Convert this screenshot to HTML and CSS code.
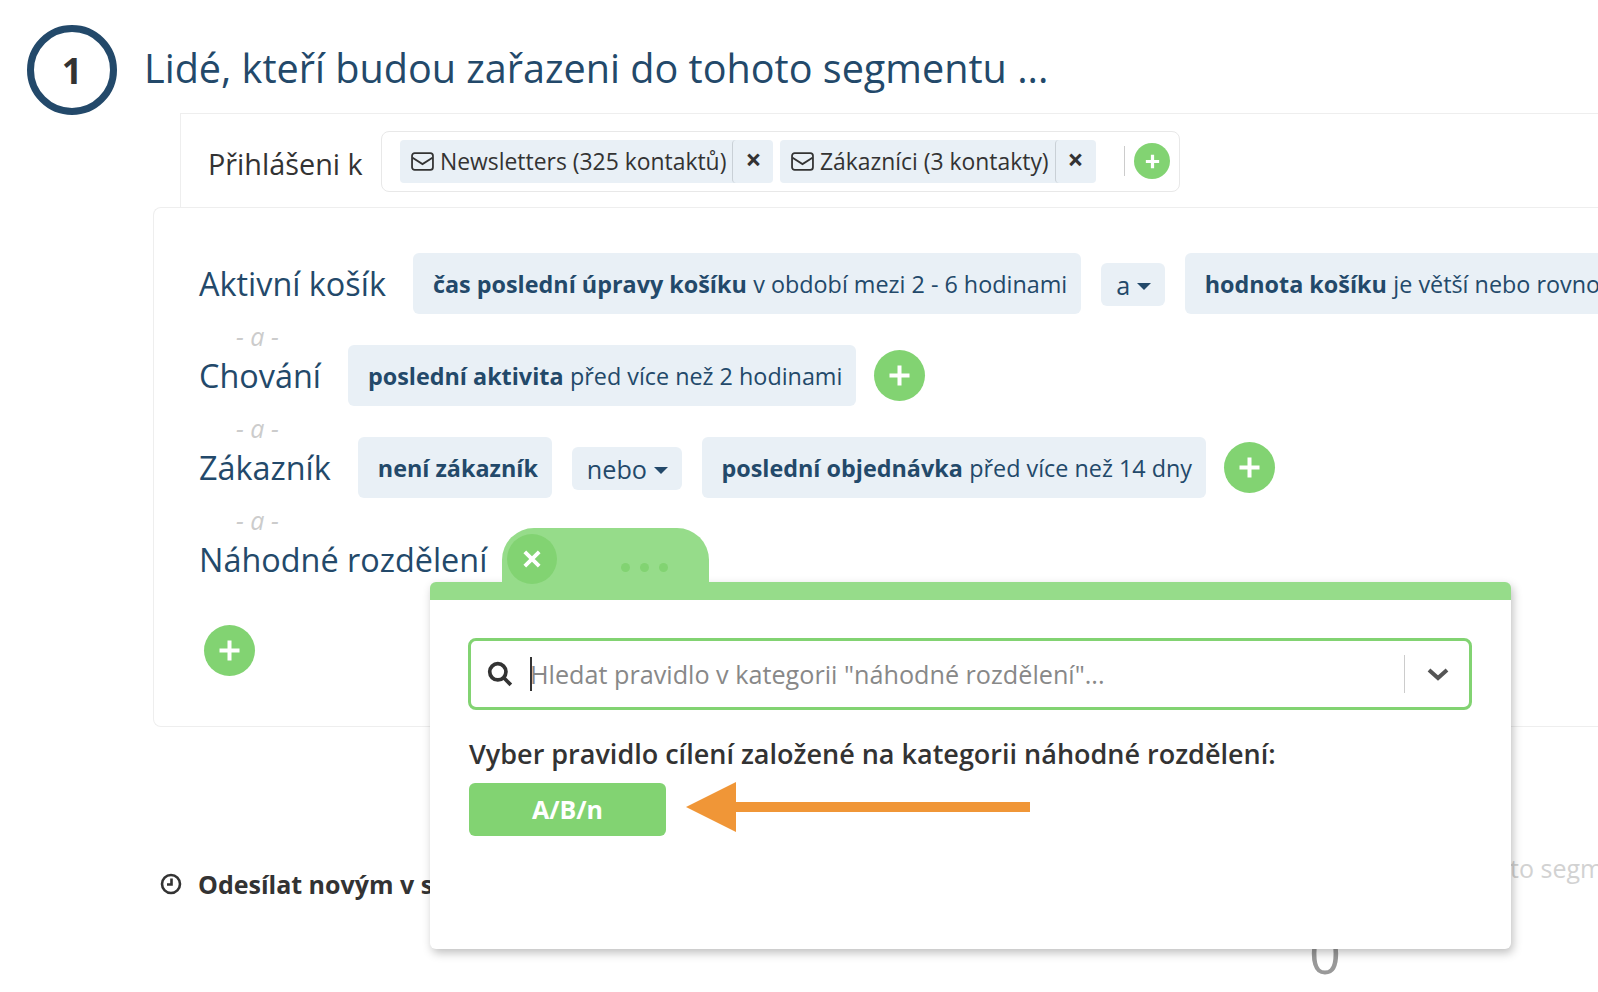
FILE: index.html
```html
<!DOCTYPE html>
<html>
<head>
<meta charset="utf-8">
<link rel="stylesheet" href="styles.css">
</head>
<body>
<div class="page">

    <div class="step-head">
        <div class="step-num">1</div>
        <h1>Lidé, kteří budou zařazeni do tohoto segmentu ...</h1>
    </div>

    <div class="subscribed">
        <div class="subscribed-label">Přihlášeni k</div>
        <div class="tag-box">
            <div class="tag">
                <svg class="mail" viewBox="0 0 22 18"><rect x="1" y="1" width="20" height="16" rx="2.5"/><path d="M1.5 5.5 L11 11.5 L20.5 5.5"/></svg>
                <span class="tag-text">Newsletters (325 kontaktů)</span>
                <span class="tag-x">×</span>
            </div>
            <div class="tag">
                <svg class="mail" viewBox="0 0 22 18"><rect x="1" y="1" width="20" height="16" rx="2.5"/><path d="M1.5 5.5 L11 11.5 L20.5 5.5"/></svg>
                <span class="tag-text">Zákazníci (3 kontakty)</span>
                <span class="tag-x">×</span>
            </div>
            <div class="tag-sep"></div>
            <div class="plus plus-small"><svg viewBox="0 0 20 20"><path d="M10 3V17M3 10H17"/></svg></div>
        </div>
    </div>

    <div class="rules">
        <div class="rule-row">
            <div class="rule-label">Aktivní košík</div>
            <div class="chip"><b>čas poslední úpravy košíku</b> v období mezi 2 - 6 hodinami</div>
            <div class="joiner">a<i class="caret"></i></div>
            <div class="chip chip-wide"><b>hodnota košíku</b> je větší nebo rovno</div>
        </div>
        <div class="and">- a -</div>
        <div class="rule-row">
            <div class="rule-label">Chování</div>
            <div class="chip"><b>poslední aktivita</b> před více než 2 hodinami</div>
            <div class="plus"><svg viewBox="0 0 20 20"><path d="M10 2V18M2 10H18"/></svg></div>
        </div>
        <div class="and">- a -</div>
        <div class="rule-row">
            <div class="rule-label">Zákazník</div>
            <div class="chip"><b>není zákazník</b></div>
            <div class="joiner">nebo<i class="caret"></i></div>
            <div class="chip"><b>poslední objednávka</b> před více než 14 dny</div>
            <div class="plus"><svg viewBox="0 0 20 20"><path d="M10 2V18M2 10H18"/></svg></div>
        </div>
        <div class="and">- a -</div>
        <div class="rule-row rule-row-last">
            <div class="rule-label">Náhodné rozdělení</div>
        </div>
        <div class="plus plus-add"><svg viewBox="0 0 20 20"><path d="M10 2V18M2 10H18"/></svg></div>
    </div>

    <div class="footer-row">
        <div class="send-new">
            <svg class="clock" viewBox="0 0 22 22"><circle cx="11" cy="11" r="9"/><path d="M11.5 5.5V11.5H7"/></svg>
            Odesílat novým v segmentu
        </div>
        <div class="count-note">v tomto segmentu</div>
    </div>
    <div class="count">0</div>

    <!-- rule picker -->
    <div class="picker">
        <div class="picker-tab">
            <div class="picker-close"><svg viewBox="0 0 20 20"><path d="M4 4L16 16M16 4L4 16"/></svg></div>
            <div class="picker-dots"><i></i><i></i><i></i></div>
        </div>
        <div class="picker-body">
            <div class="search">
                <svg class="search-icon" viewBox="0 0 24 24"><circle cx="10" cy="10" r="7.5"/><path d="M15.5 15.5L22 22"/></svg>
                <i class="cursor"></i>
                <span class="search-ph">Hledat pravidlo v kategorii "náhodné rozdělení"...</span>
                <div class="search-sep"></div>
                <svg class="chevron" viewBox="0 0 22 13"><path d="M2 2L11 10L20 2"/></svg>
            </div>
            <div class="picker-title">Vyber pravidlo cílení založené na kategorii náhodné rozdělení:</div>
            <div class="picker-options">
                <div class="btn-green">A/B/n</div>
                <svg class="arrow" viewBox="0 0 344 50"><path d="M0 25L50 0V20H344V30H50V50Z"/></svg>
            </div>
        </div>
    </div>

</div>
</body>
</html>
```

FILE: styles.css
```css
* { box-sizing: border-box; }
html, body { margin: 0; height: 100%; overflow: hidden; background: #fff; }
body { font-family: "Open Sans", sans-serif; color: #333; }
.page { position: relative; width: 1598px; height: 992px; overflow: hidden; }

/* step heading */
.step-head { display: flex; align-items: center; padding: 25px 0 0 27px; height: 115px; }
.step-num {
    width: 90px; height: 90px; flex: none;
    border: 7px solid #23496a; border-radius: 50%;
    display: flex; align-items: center; justify-content: center;
    font-size: 36px; font-weight: 700; color: #333;
}
h1 { margin: -4px 0 0 27px; font-size: 39.6px; font-weight: 400; color: #23496a; white-space: nowrap; }

/* subscribed lists */
.subscribed {
    display: flex; align-items: center;
    margin: -2px 0 0 180px; height: 94px;
    border: 1px solid #eee; border-right: 0; border-bottom: 0;
    padding-left: 27px;
}
.subscribed-label { width: 173px; font-size: 28.8px; margin-top: 6px; white-space: nowrap; }
.tag-box {
    display: flex; align-items: center;
    width: 799px; height: 61px; margin-top: 1px; padding-left: 18px;
    border: 1px solid #e8e8e8; border-radius: 8px;
}
.tag {
    display: flex; align-items: center;
    height: 43px; margin-right: 6.5px; padding-left: 11px;
    background: #e9f0f6; border-radius: 4px;
    font-size: 22.9px; white-space: nowrap;
}
.mail { width: 23px; height: 19px; margin-right: 6px; fill: none; stroke: #333; stroke-width: 1.7; }
.tag-text { margin: 1px 6px 0 0; }
.tag-x {
    width: 41px; height: 43px; line-height: 39px; text-align: center;
    border-left: 1px solid #c9d0d6; border-radius: 4px;
    font-size: 28px; font-weight: 700;
}
.tag-sep { width: 1px; height: 30px; flex: none; margin-left: 22px; background: #ccc; }

.plus {
    width: 51px; height: 51px; flex: none; border-radius: 50%;
    background: #82d372;
    display: flex; align-items: center; justify-content: center;
}
.plus svg { width: 25px; height: 25px; fill: none; stroke: #fff; stroke-width: 3.2; }
.plus-small { width: 36px; height: 36px; margin-left: 9px; }
.plus-small svg { width: 19px; height: 19px; stroke-width: 3.4; }

/* rules panel */
.rules {
    margin-left: 153px; height: 520px; padding: 45px 0 0 45px;
    border: 1px solid #eee; border-right: 0; border-radius: 8px 0 0 8px;
}
.rule-row { display: flex; align-items: center; height: 61px; white-space: nowrap; }
.rule-label { font-size: 32.4px; color: #23496a; margin-right: 27px; margin-top: -2px; }
.chip {
    display: flex; align-items: center; gap: 6.5px;
    height: 61px; padding: 0 14px 0 20px; margin-right: 20px;
    background: #e9f0f6; border-radius: 6px;
    font-size: 23.35px; color: #23496a;
}
.chip b { font-weight: 700; }
.chip-wide { width: 600px; flex: none; }
.chip + .plus { margin-left: -2px; }
.joiner {
    display: flex; align-items: center;
    height: 43px; padding: 0 14px 0 15px; margin-right: 19.5px; margin-top: 2px;
    background: #e9f0f6; border-radius: 6px;
    font-size: 25.2px; color: #23496a;
}
.caret {
    width: 0; height: 0; margin-left: 7px; margin-top: 3px;
    border: 7px solid transparent; border-top-color: #23496a; border-bottom: 0;
}
.and { height: 31px; padding-top: 7.5px; margin-left: 37px; font-size: 25px; line-height: 29px; font-style: italic; color: #ccc; }
.rule-row-last { height: 61px; }
.plus-add { margin: 35px 0 0 5px; }

/* bottom row, mostly under the picker */
.footer-row {
    display: flex; margin: 137px 0 0 160px; height: 40px;
    align-items: center; white-space: nowrap; font-size: 25px;
}
.send-new { display: flex; flex: none; align-items: center; gap: 16px; font-weight: 700; width: 1284px; }
.clock { width: 22px; height: 22px; flex: none; fill: none; stroke: #333; stroke-width: 2.6; }
.count-note { margin-bottom: 33px; color: #d2d2d2; }
.count { margin-left: 1309px; font-size: 56px; line-height: 60px; margin-top: 18px; color: #999; }

/* rule picker popup */
.picker {
    position: absolute; left: 430px; top: 528px; width: 1081px; height: 421px;
    display: flex; flex-direction: column;
}
.picker-tab {
    position: relative; margin-left: 72px; width: 207px; height: 54px; flex: none;
    background: #96dc8a; border-radius: 32px 32px 0 0;
}
.picker-close {
    position: absolute; left: 5px; top: 6px;
    width: 50px; height: 50px; border-radius: 50%; background: #82d372;
    display: flex; align-items: center; justify-content: center;
}
.picker-close svg { width: 24px; height: 24px; fill: none; stroke: #fff; stroke-width: 3.2; }
.picker-dots { position: absolute; left: 119px; top: 35px; display: flex; gap: 10px; }
.picker-dots i { width: 9px; height: 9px; border-radius: 50%; background: #82d372; }
.picker-body {
    flex: 1; padding: 38px 39px 0;
    background: #fff; border-top: 18px solid #96dc8a; border-radius: 6px;
    box-shadow: 2px 4px 10px rgba(0, 0, 0, 0.25);
}
.search {
    display: flex; align-items: center;
    height: 72px; margin-left: -1px; padding-left: 16px;
    border: 3px solid #82d372; border-radius: 8px;
}
.search-icon { width: 26px; height: 26px; flex: none; fill: none; stroke: #333; stroke-width: 3.4; }
.cursor { width: 2px; height: 34px; margin-left: 17px; background: #333; }
.search-ph { flex: 1; margin-left: -2px; font-size: 25.2px; color: #888; white-space: nowrap; }
.search-sep { width: 1px; height: 38px; background: #ccc; }
.chevron { width: 22px; height: 13px; margin: 0 20px 0 22px; fill: none; stroke: #555; stroke-width: 4; }
.picker-title { margin-top: 27px; font-size: 27px; font-weight: 600; line-height: 34px; white-space: nowrap; }
.picker-options { display: flex; align-items: flex-start; margin-top: 12px; }
.btn-green {
    width: 197px; height: 53px; line-height: 53px; text-align: center;
    background: #82d372; border-radius: 6px;
    font-size: 25px; font-weight: 700; color: #fff;
}
.arrow { width: 344px; height: 50px; margin: -1px 0 0 20px; fill: #f09637; }
```
